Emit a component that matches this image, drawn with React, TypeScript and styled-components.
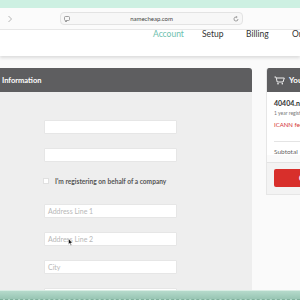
import React from "react";
import styled, { createGlobalStyle } from "styled-components";

const Global = createGlobalStyle`
  html, body { margin: 0; padding: 0; }
  body {
    width: 300px; height: 300px; overflow: hidden;
    font-family: Lato, "Open Sans", Arial, sans-serif;
    background: #ffffff;
  }
`;

const Screen = styled.div`
  width: 300px; height: 300px; display: flex; flex-direction: column; overflow: hidden;
`;

const TopBand = styled.div`
  height: 8px; flex: none; background: #cdf0e2;
`;

const BrowserBar = styled.div`
  height: 21px; flex: none; background: #fbfbfb; border-bottom: 1px solid #e8e8e8;
  display: flex; align-items: center; position: relative;
`;

const NavArrow = styled.div`
  width: 50px; padding-left: 7px; display: flex; align-items: center; color: #b0b0b0;
`;

const UrlField = styled.div`
  margin-left: 3px; width: 175px; height: 11px; border: 1px solid #e3e3e3; border-radius: 4px;
  background: #f7f7f7; display: flex; align-items: center; justify-content: space-between; padding: 0 3px;
  font-size: 6px; color: #444; box-sizing: content-box;
`;

const SiteHeader = styled.div`
  height: 26px; flex: none; background: #ffffff; display: flex; align-items: flex-start;
  box-sizing: border-box; box-shadow: 0 2px 3px rgba(0,0,0,0.12); position: relative; z-index: 1;
  padding-left: 153px; white-space: nowrap;
`;

const NavItem = styled.span<{ $active?: boolean; $w: number }>`
  font-size: 8.5px; line-height: 9px; width: ${p => p.$w}px; flex: none;
  color: ${p => (p.$active ? "#6cc0ae" : "#333")};
  font-weight: 400;
`;

const Main = styled.div`
  flex: 1; background: #fafafa; display: flex; align-items: flex-start; gap: 14px; padding-top: 12px; overflow: hidden;
`;

const Panel = styled.div`
  width: 252px; flex: none; align-self: stretch; display: flex; flex-direction: column;
  border-radius: 0 3px 0 0; overflow: hidden; background: #eeeeee;
`;

const PanelHeader = styled.div`
  height: 24px; flex: none; background: #5e5e60; color: #fff; font-weight: 700; font-size: 7.5px;
  display: flex; align-items: center; padding-left: 2px;
`;

const Form = styled.div`
  display: flex; flex-direction: column; padding: 28px 0 0 44px; gap: 14px;
`;

const Input = styled.div`
  width: 133px; height: 14px; background: #fff; border: 1px solid #e6e6e6; border-radius: 1px;
  box-sizing: border-box; font-size: 7px; color: #b8b8b8; display: flex; align-items: center; padding-left: 3px;
  position: relative; flex: none;
`;

const CheckRow = styled.div`
  display: flex; align-items: center; gap: 6px; height: 10px; margin: 0 0 4px -1px;
  font-size: 6.6px; font-weight: 700; color: #555;
`;

const Box = styled.span`
  width: 4px; height: 4px; background: #fff; border: 1px solid #e0e0e0;
`;

const Card = styled.div`
  width: 60px; flex: none; display: flex; flex-direction: column; border-radius: 3px 0 0 0; overflow: hidden;
  border: 1px solid #e6e6e6; border-right: none; border-top: none;
`;

const CardHeader = styled.div`
  height: 24px; background: #5e5e60; color: #fff; font-weight: 700; font-size: 8px;
  display: flex; align-items: center; gap: 4px; padding-left: 7px; white-space: nowrap;
`;

const CardBody = styled.div`
  background: #fff; padding: 7px 0 0 7px; display: flex; flex-direction: column; white-space: nowrap;
`;

const Domain = styled.div` font-size: 7px; font-weight: 700; color: #333; height: 9px; `;
const Period = styled.div` font-size: 5px; color: #777; margin-top: 2px; `;
const Fee = styled.div` font-size: 6px; color: #d43535; margin-top: 5px; `;
const Divider = styled.div` height: 1px; background: #e4e4e4; margin: 13px 0 0 0; `;
const Subtotal = styled.div` font-size: 6.5px; color: #666; margin-top: 6px; `;

const CardFooter = styled.div`
  background: #f3f3f3; padding: 6px 0 7px 7px; border-top: 1px solid #e4e4e4; margin-top: 7px;
`;

const Button = styled.div`
  height: 18px; background: #d82f2b; border-radius: 2px 0 0 2px; color: #fff; font-size: 7px; font-weight: 700;
  display: flex; align-items: center; padding-left: 25px; white-space: nowrap;
`;

const BottomBar = styled.div`
  height: 10px; flex: none; background: linear-gradient(#b5dacb, #98c5b3);
  border-top: 1px solid #d8ece3; border-bottom: 1px dashed #7fb09b; box-sizing: border-box;
`;

const Cursor = styled.svg`
  position: absolute; left: 23px; top: 5px;
`;

export default function App() {
  return (
    <Screen>
      <Global />
      <TopBand />
      <BrowserBar>
        <NavArrow>
          <svg width="6" height="8" viewBox="0 0 6 8"><path d="M1.5 1 L4.5 4 L1.5 7" fill="none" stroke="#b5b5b5" strokeWidth="1" /></svg>
        </NavArrow>
        <UrlField>
          <svg width="6" height="6" viewBox="0 0 6 6"><rect x="0.5" y="0.5" width="5" height="4" rx="1" fill="none" stroke="#888" strokeWidth="0.8" /><path d="M1 5.5 H3" stroke="#888" strokeWidth="0.8" /></svg>
          <span>namecheap.com</span>
          <svg width="6" height="6" viewBox="0 0 6 6"><path d="M5 3 A2 2 0 1 1 3.5 1.1" fill="none" stroke="#888" strokeWidth="0.8" /><path d="M3 0.3 L4.2 1.1 L3.1 2" fill="none" stroke="#888" strokeWidth="0.7" /></svg>
        </UrlField>
      </BrowserBar>
      <SiteHeader>
        <NavItem $active $w={49}>Account</NavItem>
        <NavItem $w={44}>Setup</NavItem>
        <NavItem $w={46}>Billing</NavItem>
        <NavItem $w={20}>Order</NavItem>
      </SiteHeader>
      <Main>
        <Panel>
          <PanelHeader>Information</PanelHeader>
          <Form>
            <Input />
            <Input />
            <CheckRow><Box />I'm registering on behalf of a company</CheckRow>
            <Input>Address Line 1</Input>
            <Input>
              Address Line 2
              <Cursor width="5" height="8" viewBox="0 0 5 8">
                <path d="M0.5 0.5 L0.5 6.5 L1.8 5.3 L2.8 7.5 L3.6 7.1 L2.6 5 L4.4 5 Z" fill="#111" stroke="#fff" strokeWidth="0.5" />
              </Cursor>
            </Input>
            <Input>City</Input>
            <Input />
          </Form>
        </Panel>
        <Card>
          <CardHeader>
            <svg width="11" height="9" viewBox="0 0 11 9">
              <path d="M0.5 1 H2 L3.2 6 H9 L10.3 2 H2.6" fill="none" stroke="#fff" strokeWidth="0.9" />
              <circle cx="4" cy="7.8" r="0.8" fill="#fff" />
              <circle cx="8.3" cy="7.8" r="0.8" fill="#fff" />
            </svg>
            Your Cart
          </CardHeader>
          <CardBody>
            <Domain>40404.net</Domain>
            <Period>1 year registration</Period>
            <Fee>ICANN fee</Fee>
            <Divider />
            <Subtotal>Subtotal</Subtotal>
          </CardBody>
          <CardFooter>
            <Button>Confirm</Button>
          </CardFooter>
        </Card>
      </Main>
      <BottomBar />
    </Screen>
  );
}
